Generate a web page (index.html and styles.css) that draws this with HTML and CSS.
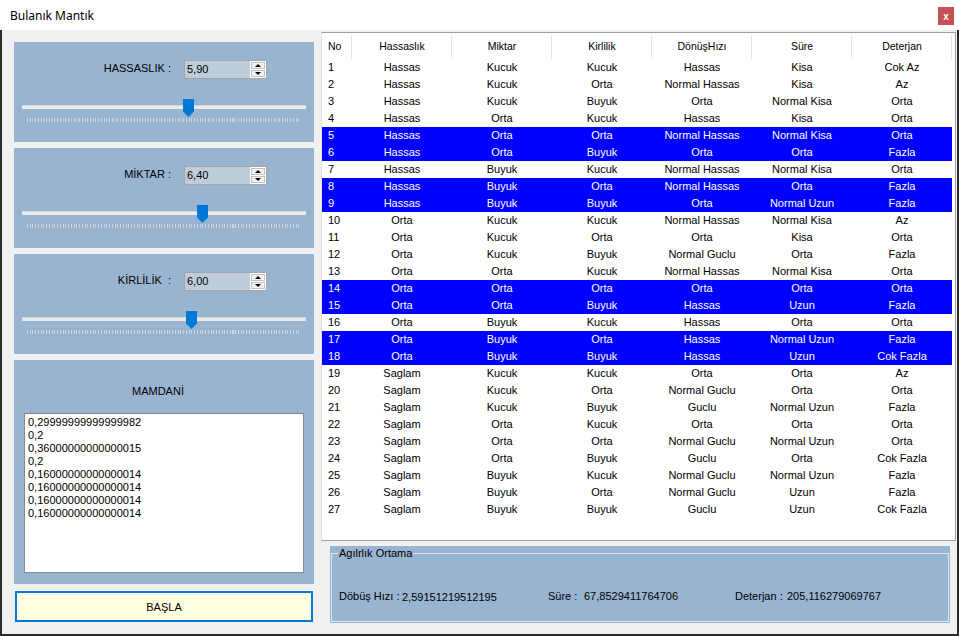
FILE: index.html
```html
<!DOCTYPE html>
<html lang="tr">
<head>
<meta charset="utf-8">
<title>Bulanık Mantık</title>
<link rel="stylesheet" href="styles.css">
</head>
<body>
<div class="window">
  <div class="titlebar">
    <span class="title">Bulanık Mantık</span>
    <span class="close">x</span>
  </div>
  <div class="client">
    <div class="left">
      <div class="panel input-panel">
        <div class="field-row">
          <span class="field-label">HASSASLIK :</span>
          <div class="numeric"><span class="num-value">5,90</span><div class="spin"><span class="spin-btn up"></span><span class="spin-btn down"></span></div></div>
        </div>
        <div class="slider">
          <div class="track"></div>
          <div class="thumb" style="left:161px"></div>
          <div class="ticks"></div>
        </div>
      </div>
      <div class="panel input-panel">
        <div class="field-row">
          <span class="field-label">MİKTAR :</span>
          <div class="numeric"><span class="num-value">6,40</span><div class="spin"><span class="spin-btn up"></span><span class="spin-btn down"></span></div></div>
        </div>
        <div class="slider">
          <div class="track"></div>
          <div class="thumb" style="left:175px"></div>
          <div class="ticks"></div>
        </div>
      </div>
      <div class="panel input-panel">
        <div class="field-row">
          <span class="field-label">KİRLİLİK&nbsp; :</span>
          <div class="numeric"><span class="num-value">6,00</span><div class="spin"><span class="spin-btn up"></span><span class="spin-btn down"></span></div></div>
        </div>
        <div class="slider">
          <div class="track"></div>
          <div class="thumb" style="left:164px"></div>
          <div class="ticks"></div>
        </div>
      </div>
      <div class="panel mamdani">
        <div class="mamdani-title">MAMDANİ</div>
        <div class="listbox">
          <div>0,29999999999999982</div>
          <div>0,2</div>
          <div>0,36000000000000015</div>
          <div>0,2</div>
          <div>0,16000000000000014</div>
          <div>0,16000000000000014</div>
          <div>0,16000000000000014</div>
          <div>0,16000000000000014</div>
        </div>
      </div>
      <button class="start">BAŞLA</button>
    </div>
    <div class="right">
      <div class="grid">
        <table>
          <colgroup><col class="c-no"><col class="c"><col class="c"><col class="c"><col class="c"><col class="c"><col class="c"></colgroup>
          <thead>
            <tr><th class="no">No</th><th>Hassaslık</th><th>Miktar</th><th>Kirlilik</th><th>DönüşHızı</th><th>Süre</th><th>Deterjan</th></tr>
          </thead>
          <tbody>
            <tr><td class="no">1</td><td>Hassas</td><td>Kucuk</td><td>Kucuk</td><td>Hassas</td><td>Kisa</td><td>Cok Az</td></tr>
            <tr><td class="no">2</td><td>Hassas</td><td>Kucuk</td><td>Orta</td><td>Normal Hassas</td><td>Kisa</td><td>Az</td></tr>
            <tr><td class="no">3</td><td>Hassas</td><td>Kucuk</td><td>Buyuk</td><td>Orta</td><td>Normal Kisa</td><td>Orta</td></tr>
            <tr><td class="no">4</td><td>Hassas</td><td>Orta</td><td>Kucuk</td><td>Hassas</td><td>Kisa</td><td>Orta</td></tr>
            <tr class="sel"><td class="no">5</td><td>Hassas</td><td>Orta</td><td>Orta</td><td>Normal Hassas</td><td>Normal Kisa</td><td>Orta</td></tr>
            <tr class="sel"><td class="no">6</td><td>Hassas</td><td>Orta</td><td>Buyuk</td><td>Orta</td><td>Orta</td><td>Fazla</td></tr>
            <tr><td class="no">7</td><td>Hassas</td><td>Buyuk</td><td>Kucuk</td><td>Normal Hassas</td><td>Normal Kisa</td><td>Orta</td></tr>
            <tr class="sel"><td class="no">8</td><td>Hassas</td><td>Buyuk</td><td>Orta</td><td>Normal Hassas</td><td>Orta</td><td>Fazla</td></tr>
            <tr class="sel"><td class="no">9</td><td>Hassas</td><td>Buyuk</td><td>Buyuk</td><td>Orta</td><td>Normal Uzun</td><td>Fazla</td></tr>
            <tr><td class="no">10</td><td>Orta</td><td>Kucuk</td><td>Kucuk</td><td>Normal Hassas</td><td>Normal Kisa</td><td>Az</td></tr>
            <tr><td class="no">11</td><td>Orta</td><td>Kucuk</td><td>Orta</td><td>Orta</td><td>Kisa</td><td>Orta</td></tr>
            <tr><td class="no">12</td><td>Orta</td><td>Kucuk</td><td>Buyuk</td><td>Normal Guclu</td><td>Orta</td><td>Fazla</td></tr>
            <tr><td class="no">13</td><td>Orta</td><td>Orta</td><td>Kucuk</td><td>Normal Hassas</td><td>Normal Kisa</td><td>Orta</td></tr>
            <tr class="sel"><td class="no">14</td><td>Orta</td><td>Orta</td><td>Orta</td><td>Orta</td><td>Orta</td><td>Orta</td></tr>
            <tr class="sel"><td class="no">15</td><td>Orta</td><td>Orta</td><td>Buyuk</td><td>Hassas</td><td>Uzun</td><td>Fazla</td></tr>
            <tr><td class="no">16</td><td>Orta</td><td>Buyuk</td><td>Kucuk</td><td>Hassas</td><td>Orta</td><td>Orta</td></tr>
            <tr class="sel"><td class="no">17</td><td>Orta</td><td>Buyuk</td><td>Orta</td><td>Hassas</td><td>Normal Uzun</td><td>Fazla</td></tr>
            <tr class="sel"><td class="no">18</td><td>Orta</td><td>Buyuk</td><td>Buyuk</td><td>Hassas</td><td>Uzun</td><td>Cok Fazla</td></tr>
            <tr><td class="no">19</td><td>Saglam</td><td>Kucuk</td><td>Kucuk</td><td>Orta</td><td>Orta</td><td>Az</td></tr>
            <tr><td class="no">20</td><td>Saglam</td><td>Kucuk</td><td>Orta</td><td>Normal Guclu</td><td>Orta</td><td>Orta</td></tr>
            <tr><td class="no">21</td><td>Saglam</td><td>Kucuk</td><td>Buyuk</td><td>Guclu</td><td>Normal Uzun</td><td>Fazla</td></tr>
            <tr><td class="no">22</td><td>Saglam</td><td>Orta</td><td>Kucuk</td><td>Orta</td><td>Orta</td><td>Orta</td></tr>
            <tr><td class="no">23</td><td>Saglam</td><td>Orta</td><td>Orta</td><td>Normal Guclu</td><td>Normal Uzun</td><td>Orta</td></tr>
            <tr><td class="no">24</td><td>Saglam</td><td>Orta</td><td>Buyuk</td><td>Guclu</td><td>Orta</td><td>Cok Fazla</td></tr>
            <tr><td class="no">25</td><td>Saglam</td><td>Buyuk</td><td>Kucuk</td><td>Normal Guclu</td><td>Normal Uzun</td><td>Fazla</td></tr>
            <tr><td class="no">26</td><td>Saglam</td><td>Buyuk</td><td>Orta</td><td>Normal Guclu</td><td>Uzun</td><td>Fazla</td></tr>
            <tr><td class="no">27</td><td>Saglam</td><td>Buyuk</td><td>Buyuk</td><td>Guclu</td><td>Uzun</td><td>Cok Fazla</td></tr>
          </tbody>
        </table>
      </div>
      <div class="groupbox">
        <fieldset>
          <legend>Agılrlık Ortama</legend>
          <div class="results">
            <span class="r-l1">Döbüş Hızı :</span>
            <span class="r-v1">2,59151219512195</span>
            <span class="r-l2">Süre :</span>
            <span class="r-v2">67,8529411764706</span>
            <span class="r-l3">Deterjan :</span>
            <span class="r-v3">205,116279069767</span>
          </div>
        </fieldset>
      </div>
    </div>
  </div>
</div>
</body>
</html>
```
FILE: styles.css
```css
html, body {
  margin: 0;
  padding: 0;
}
body {
  background: #ffffff;
  font-family: "Liberation Sans", Arial, sans-serif;
  font-size: 11px;
  color: #000;
}
.window {
  width: 959px;
  height: 636px;
  display: flex;
  flex-direction: column;
  overflow: hidden;
}
.titlebar {
  height: 30px;
  flex: none;
  display: flex;
  align-items: center;
  padding: 0 5px 0 10px;
  background: #fff;
}
.title {
  font-family: "Noto Sans", sans-serif;
  font-size: 12px;
  color: #000;
}
.close {
  margin-left: auto;
  margin-top: 2px;
  width: 16px;
  height: 18px;
  background: #c75050;
  color: #fff;
  font-family: "Liberation Sans", Arial, sans-serif;
  font-weight: bold;
  font-size: 10px;
  display: flex;
  align-items: center;
  justify-content: center;
}
.client {
  flex: 1;
  display: flex;
  background: #f0f0f0;
  border: 2px solid #2b2b2b;
  border-top: 0;
}
.left {
  width: 300px;
  flex: none;
  margin-left: 12px;
  padding-top: 12px;
  display: flex;
  flex-direction: column;
  gap: 6px;
}
.panel {
  background: #99b4d1;
}
.input-panel {
  height: 100px;
  box-sizing: border-box;
  padding-top: 18px;
}
.field-row {
  display: flex;
  align-items: center;
  height: 19px;
}
.field-label {
  width: 157px;
  margin-right: 13px;
  text-align: right;
  white-space: nowrap;
  margin-bottom: 4px;
  font-size: 11px;
}
.numeric {
  width: 83px;
  height: 19px;
  box-sizing: border-box;
  border: 1px solid #a6a6a6;
  background: #bfcddb;
  display: flex;
}
.num-value {
  flex: 1;
  padding-left: 2px;
  line-height: 17px;
}
.spin {
  width: 16px;
  box-sizing: border-box;
  display: flex;
  flex-direction: column;
  background: #fff;
  padding: 1px;
  gap: 1px;
}
.spin-btn {
  flex: 1;
  border: 1px solid #c2c2c2;
  background: #f3f3f3;
  display: flex;
  align-items: center;
  justify-content: center;
}
.spin-btn::before {
  content: "";
  border-left: 3px solid transparent;
  border-right: 3px solid transparent;
}
.up::before {
  border-bottom: 3px solid #000;
}
.down::before {
  border-top: 3px solid #000;
}
.slider {
  position: relative;
  display: flow-root;
  margin: 20px 0 0 8px;
  width: 284px;
}
.track {
  margin-top: 6px;
  height: 4px;
  box-sizing: border-box;
  background: #e9ebeb;
  border-top: 1px solid #d6d6d6;
}
.thumb {
  position: absolute;
  top: 0;
  width: 11px;
  height: 18px;
  background: #0078d7;
  clip-path: polygon(0 0, 100% 0, 100% 70%, 50% 100%, 0 70%);
}
.ticks {
  margin: 9px 5px 0;
  height: 4px;
  background: repeating-linear-gradient(to right, #cdd6e1 0 1px, transparent 1px 2.74px);
}
.mamdani {
  height: 224px;
  box-sizing: border-box;
  padding-top: 25px;
}
.mamdani-title {
  padding-left: 118px;
  line-height: 13px;
}
.listbox {
  margin: 15px 0 0 10px;
  width: 280px;
  height: 160px;
  box-sizing: border-box;
  border: 1px solid #828790;
  background: #fff;
  padding: 2px 3px;
  line-height: 13px;
}
.start {
  margin: 1px 0 0 1px;
  width: 298px;
  height: 31px;
  box-sizing: border-box;
  background: #ffffe0;
  border: 2px solid #0078d7;
  font-family: "Liberation Sans", Arial, sans-serif;
  font-size: 11px;
  color: #000;
  padding: 0;
}
.right {
  width: 635px;
  flex: none;
  margin-left: 7px;
  padding-top: 2px;
  display: flex;
  flex-direction: column;
}
.grid {
  height: 509px;
  box-sizing: border-box;
  border: 1px solid #a0a0a0;
  border-left-color: #e2e2e2;
  background: #fff;
}
table {
  border-collapse: collapse;
  table-layout: fixed;
  width: 630px;
}
col.c-no {
  width: 30px;
}
col.c {
  width: 100px;
}
th {
  height: 26px;
  padding: 0;
  font-weight: normal;
  font-size: 10.5px;
  text-align: center;
  white-space: nowrap;
  background: linear-gradient(#e3e3e3, #e3e3e3) no-repeat right 0 top 2px / 1px 24px;
}
th.no {
  text-align: left;
  padding-left: 6px;
}
td {
  height: 17px;
  line-height: 17px;
  padding: 0;
  text-align: center;
  white-space: nowrap;
}
td.no {
  text-align: left;
  padding-left: 6px;
}
tr.sel td {
  background: #0000ff;
  color: #fff;
}
.groupbox {
  margin: 5px 6px 0 9px;
  height: 77px;
  box-sizing: border-box;
  padding: 1px;
  background: #99b4d1;
}
.groupbox fieldset {
  margin: 0;
  padding: 0;
  height: 100%;
  box-sizing: border-box;
  border: 1px solid #dde6ef;
  min-inline-size: 0;
}
.groupbox legend {
  padding: 0 1px;
  margin-left: 6px;
  line-height: 13px;
  font-size: 11px;
}
.results {
  display: flex;
  margin-top: 30px;
  padding-left: 7px;
  line-height: 13px;
  white-space: nowrap;
}
.r-l1 { width: 63px; }
.r-v1 { width: 146px; margin-top: 1px; }
.r-l2 { width: 36px; }
.r-v2 { width: 151px; }
.r-l3 { width: 52px; }
```
